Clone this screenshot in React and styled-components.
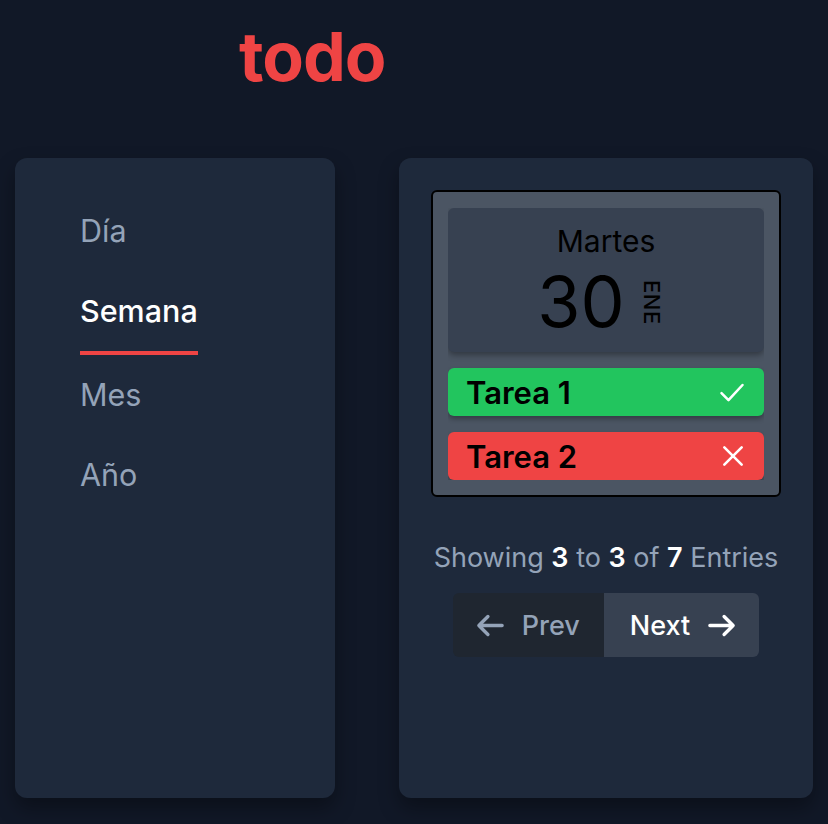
import React from 'react';
import styled, { createGlobalStyle } from 'styled-components';

const GlobalStyle = createGlobalStyle`
  body {
    margin: 0;
    background: #111827;
    font-family: Inter, 'Noto Sans', sans-serif;
  }
`;

const Page = styled.div`
  width: 828px;
  height: 824px;
  box-sizing: border-box;
  padding: 0 15px;
  display: flex;
  flex-direction: column;
`;

const Header = styled.header`
  height: 158px;
  display: flex;
  align-items: flex-start;
  padding-left: 224px;
`;

const Title = styled.h1`
  margin: 14px 0 0;
  color: #ef4444;
  font-size: 68px;
  font-weight: 700;
  letter-spacing: -1px;
  line-height: 84px;
`;

const Main = styled.main`
  display: flex;
  gap: 64px;
`;

const Panel = styled.section`
  background: #1e293b;
  border-radius: 12px;
  height: 640px;
  box-sizing: border-box;
  box-shadow: 0 10px 20px rgba(0, 0, 0, 0.35);
`;

const NavPanel = styled(Panel)`
  width: 320px;
  padding: 33px 0 0 65px;
  display: flex;
  flex-direction: column;
  align-items: flex-start;
`;

const NavItem = styled.div`
  padding: 20px 0;
  line-height: 40px;
  font-size: 30.5px;
  color: ${(p) => (p.active ? '#ffffff' : '#94a3b8')};
  font-weight: ${(p) => (p.active ? 500 : 400)};
  border-bottom: ${(p) => (p.active ? '4px solid #ef4444' : 'none')};
  cursor: pointer;
`;

const ContentPanel = styled(Panel)`
  width: 414px;
  padding: 32px;
  display: flex;
  flex-direction: column;
  align-items: center;
`;

const WeekBox = styled.div`
  width: 350px;
  box-sizing: border-box;
  border: 2px solid #000;
  border-radius: 6px;
  background: #4b5563;
  padding: 16px 15px 15px;
`;

const Scroller = styled.div`
  height: 272px;
  overflow: hidden;
  display: flex;
  flex-direction: column;
  gap: 16px;
`;

const DateCard = styled.div`
  flex: none;
  height: 144px;
  border-radius: 6px;
  background: #374151;
  box-shadow: 0 3px 6px rgba(0, 0, 0, 0.35);
  display: flex;
  flex-direction: column;
  align-items: center;
  color: #000;
`;

const DayName = styled.div`
  margin-top: 14px;
  font-size: 30px;
  line-height: 38px;
`;

const DateRow = styled.div`
  display: flex;
  align-items: center;
  gap: 16px;
  margin-left: -12px;
  margin-top: 4px;
`;

const DayNum = styled.div`
  font-size: 70px;
  line-height: 76px;
`;

const Month = styled.div`
  writing-mode: vertical-rl;
  font-size: 22px;
  font-weight: 500;
  letter-spacing: 0.5px;
  line-height: 22px;
`;

const Task = styled.div`
  flex: none;
  height: 48px;
  border-radius: 6px;
  background: ${(p) => (p.done ? '#22c55e' : '#ef4444')};
  box-shadow: 0 3px 5px rgba(0, 0, 0, 0.3);
  display: flex;
  align-items: center;
  justify-content: space-between;
  padding: 0 18px;
  font-size: 31px;
  font-weight: 600;
  color: #000;
`;

const Showing = styled.p`
  margin: 44px 0 0;
  font-size: 27px;
  line-height: 34px;
  white-space: nowrap;
  color: #94a3b8;
  b {
    color: #fff;
    font-weight: 600;
  }
`;

const Pager = styled.div`
  display: flex;
  margin-top: 18px;
`;

const PageButton = styled.button`
  height: 64px;
  border: none;
  font-family: inherit;
  font-size: 27px;
  display: flex;
  align-items: center;
  gap: 16px;
  padding: ${(p) => (p.next ? '0 22px 0 26px' : '0 24px 0 22px')};
  background: ${(p) => (p.next ? '#374151' : '#1f2630')};
  color: ${(p) => (p.next ? '#ffffff' : '#94a3b8')};
  font-weight: 500;
  border-radius: ${(p) => (p.next ? '0 6px 6px 0' : '6px 0 0 6px')};
  cursor: pointer;
`;

const Arrow = ({ dir }) => (
  <svg width="31" height="31" viewBox="0 0 24 24" fill="none" stroke="currentColor" strokeWidth="2.6" strokeLinecap="round" strokeLinejoin="round">
    {dir === 'left' ? (
      <path d="M21 12H4M10 5l-7 7 7 7" />
    ) : (
      <path d="M3 12h17M14 5l7 7-7 7" />
    )}
  </svg>
);

const Check = () => (
  <svg width="28" height="28" viewBox="0 0 24 24" fill="none" stroke="#fff" strokeWidth="2.2" strokeLinecap="round" strokeLinejoin="round">
    <path d="M3 13l6 6L21 6" />
  </svg>
);

const Cross = () => (
  <svg width="26" height="26" viewBox="0 0 24 24" fill="none" stroke="#fff" strokeWidth="2.4" strokeLinecap="round">
    <path d="M4 4l16 16M20 4L4 20" />
  </svg>
);

const views = ['Día', 'Semana', 'Mes', 'Año'];

export default function App() {
  return (
    <>
      <GlobalStyle />
      <Page>
        <Header>
          <Title>todo</Title>
        </Header>
        <Main>
          <NavPanel>
            {views.map((v) => (
              <NavItem key={v} active={v === 'Semana'}>
                {v}
              </NavItem>
            ))}
          </NavPanel>
          <ContentPanel>
            <WeekBox>
              <Scroller>
                <DateCard>
                  <DayName>Martes</DayName>
                  <DateRow>
                    <DayNum>30</DayNum>
                    <Month>ENE</Month>
                  </DateRow>
                </DateCard>
                <Task done>
                  Tarea 1 <Check />
                </Task>
                <Task>
                  Tarea 2 <Cross />
                </Task>
              </Scroller>
            </WeekBox>
            <Showing>
              Showing <b>3</b> to <b>3</b> of <b>7</b> Entries
            </Showing>
            <Pager>
              <PageButton>
                <Arrow dir="left" /> Prev
              </PageButton>
              <PageButton next>
                Next <Arrow dir="right" />
              </PageButton>
            </Pager>
          </ContentPanel>
        </Main>
      </Page>
    </>
  );
}
